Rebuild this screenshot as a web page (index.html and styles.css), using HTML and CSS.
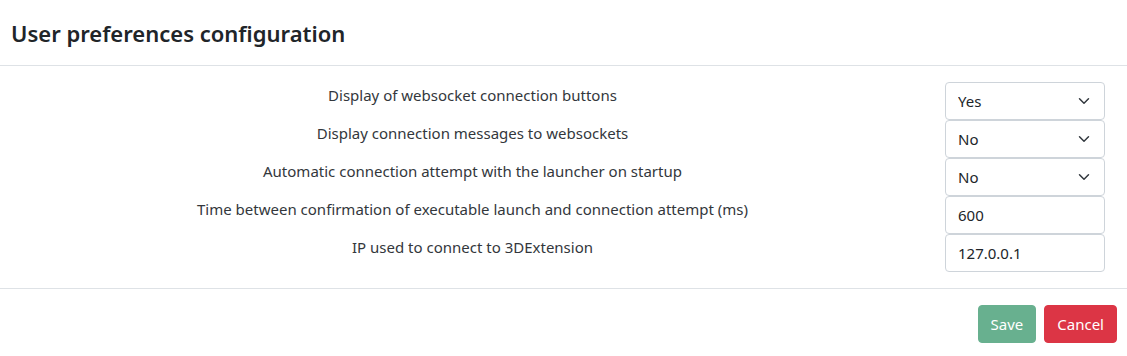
FILE: index.html
```html
<!DOCTYPE html>
<html lang="en">
<head>
<meta charset="utf-8">
<title>User preferences configuration</title>
<link rel="stylesheet" href="styles.css">
</head>
<body>
<div class="modal">
  <div class="modal-header">
    <h5 class="modal-title">User preferences configuration</h5>
  </div>
  <div class="modal-body">
    <div class="pref-row">
      <label class="pref-label">Display of websocket connection buttons</label>
      <div class="pref-control"><select class="form-select"><option>Yes</option><option>No</option></select></div>
    </div>
    <div class="pref-row">
      <label class="pref-label">Display connection messages to websockets</label>
      <div class="pref-control"><select class="form-select"><option>No</option><option>Yes</option></select></div>
    </div>
    <div class="pref-row">
      <label class="pref-label">Automatic connection attempt with the launcher on startup</label>
      <div class="pref-control"><select class="form-select"><option>No</option><option>Yes</option></select></div>
    </div>
    <div class="pref-row">
      <label class="pref-label">Time between confirmation of executable launch and connection attempt (ms)</label>
      <div class="pref-control"><input class="form-control" type="text" value="600"></div>
    </div>
    <div class="pref-row">
      <label class="pref-label">IP used to connect to 3DExtension</label>
      <div class="pref-control"><input class="form-control" type="text" value="127.0.0.1"></div>
    </div>
  </div>
  <div class="modal-footer">
    <button class="btn btn-success" disabled>Save</button>
    <button class="btn btn-danger">Cancel</button>
  </div>
</div>
</body>
</html>
```
FILE: styles.css
```css
* { box-sizing: border-box; }
html, body { margin: 0; padding: 0; background: #fff; }
body {
  font-family: "Noto Sans", "Open Sans", sans-serif;
  font-size: 15px;
  color: #212529;
}
.modal { width: 1127px; }
.modal-header {
  padding: 16px 11px 16px 11px;
  border-bottom: 1px solid #dee2e6;
  height: 66px;
  display: flex;
  align-items: center;
}
.modal-title {
  margin: 0;
  font-size: 22px;
  font-weight: 600;
  line-height: 30px;
  color: #212529;
}
.modal-body {
  padding: 16px 22px 16px 0;
}
.pref-row {
  display: flex;
  align-items: flex-start;
  height: 38px;
}
.pref-label {
  flex: 1;
  text-align: center;
  line-height: 26px;
  color: #33373c;
}
.pref-control { width: 160px; }
.form-select, .form-control {
  display: block;
  width: 160px;
  height: 38px;
  padding: 6px 12px;
  font-family: inherit;
  font-size: 15px;
  color: #212529;
  background-color: #fff;
  border: 1px solid #ced4da;
  border-radius: 4px;
  outline: none;
}
.form-select {
  appearance: none;
  -webkit-appearance: none;
  padding-right: 36px;
  background-image: url("data:image/svg+xml,%3csvg xmlns='http://www.w3.org/2000/svg' viewBox='0 0 16 16'%3e%3cpath fill='none' stroke='%23343a40' stroke-linecap='round' stroke-linejoin='round' stroke-width='2' d='m2 5 6 6 6-6'/%3e%3c/svg%3e");
  background-repeat: no-repeat;
  background-position: right 12px center;
  background-size: 16px 12px;
}
.modal-footer {
  border-top: 1px solid #dee2e6;
  padding: 16px 10px 12px 0;
  display: flex;
  justify-content: flex-end;
  gap: 8px;
}
.btn {
  font-family: inherit;
  font-size: 15px;
  line-height: 24px;
  padding: 6px 12px;
  height: 38px;
  border-radius: 4px;
  border: 1px solid transparent;
  color: #fff;
  cursor: pointer;
}
.btn-success { background: #198754; border-color: #198754; }
.btn-success:disabled { opacity: 0.65; }
.btn-danger { background: #dc3545; border-color: #dc3545; }
```
